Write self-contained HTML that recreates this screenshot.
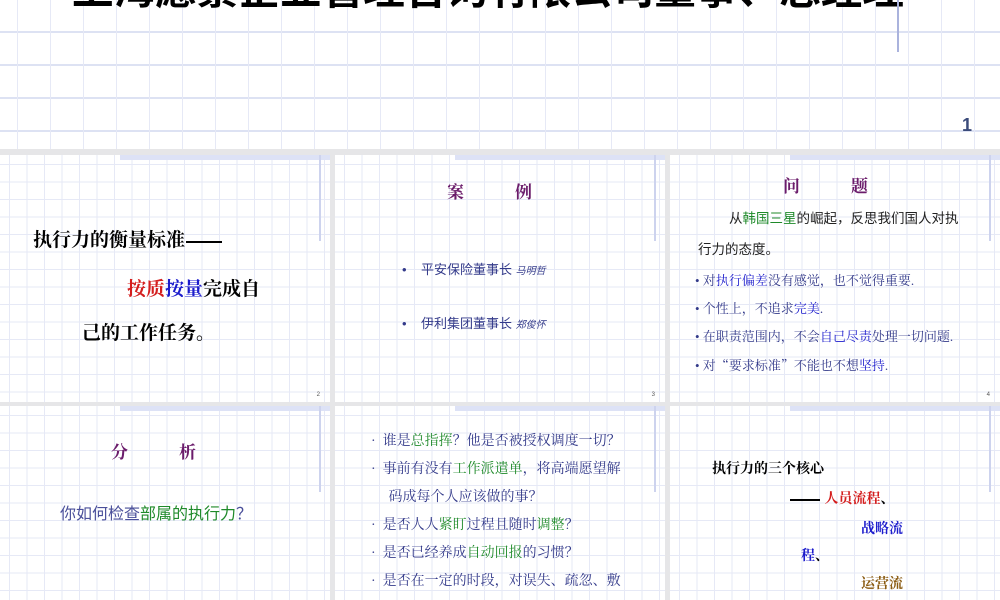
<!DOCTYPE html>
<html><head><meta charset="utf-8"><style>
*{margin:0;padding:0;box-sizing:border-box}
body{width:1000px;height:600px;background:#e6e6e8;position:relative;overflow:hidden;font-family:"Liberation Sans","Noto Sans CJK SC",sans-serif}
.top{position:absolute;left:0;top:0;width:1000px;height:149px;background-color:#fff;
background-image:linear-gradient(to right,#e6e9f6 1px,transparent 1px),linear-gradient(to bottom,#dde2f3 2px,transparent 2px);
background-size:33px 33px,33px 33px;background-position:17px 0,0 31px}
.s{position:absolute;width:330px;background-color:#fff;overflow:hidden;
background-image:linear-gradient(to right,#e6e9f6 1px,transparent 1px),linear-gradient(to bottom,#e6e9f6 1px,transparent 1px);
background-size:17.5px 17.5px;background-position:9px 0,0 9px}
.bar{position:absolute;left:120px;top:0;width:215px;height:5px;background:#dde2f6}
.vl{position:absolute;left:319px;top:0;width:2px;height:86px;background:#cdd3ee}
.t{position:absolute;white-space:nowrap;line-height:1}
.pn{position:absolute;font-size:6px;color:#555;right:10px;bottom:4px}
.k{font-family:"Liberation Serif","Noto Serif CJK SC",serif;font-weight:bold}
.cj{font-family:"Noto Serif CJK SC",serif}
.dash{display:inline-block;height:2px;background:#000;vertical-align:middle;margin:0 1px}
.pur{color:#6b1c6b;font-family:"Liberation Serif","Noto Serif CJK SC",serif;font-weight:bold;font-size:17px}
.nv{color:#333a8a}
.g{color:#1f8a2a}
.b{color:#1c1ccc}
.r{color:#d41e1e}
</style></head><body>
<div class="top">
<div class="t" style="left:72px;top:-31px;font-size:41.6px;font-weight:bold;color:#000">上海愿景企业管理咨询有限公司董事、总经理</div>
<div style="position:absolute;left:897px;top:0;width:2px;height:52px;background:#aab3dd"></div>
<div class="t" style="left:962px;top:116px;font-size:18px;font-weight:bold;color:#3a4a7a">1</div>
</div>

<div class="s" style="left:0;top:155px;height:247px"><div class="bar"></div><div class="vl"></div>
<div class="t k" style="left:33px;top:76px;font-size:19px;color:#000">执行力的衡量标准<span class="dash" style="width:36px"></span></div>
<div class="t k" style="left:127px;top:125px;font-size:19px;color:#000"><span class="r">按质</span><span class="b">按量</span>完成自</div>
<div class="t k" style="left:82px;top:169px;font-size:19px;color:#000">己的工作任务。</div>
<div class="pn">2</div></div>

<div class="s" style="left:335px;top:155px;height:247px"><div class="bar"></div><div class="vl"></div>
<div class="t pur" style="left:112px;top:29px">案　　　例</div>
<div class="t nv" style="left:67px;top:108px;font-size:13px">•&nbsp;&nbsp;&nbsp;&nbsp;平安保险董事长 <i style="font-size:10px">马明哲</i></div>
<div class="t nv" style="left:67px;top:162px;font-size:13px">•&nbsp;&nbsp;&nbsp;&nbsp;伊利集团董事长 <i style="font-size:10px">郑俊怀</i></div>
<div class="pn">3</div></div>

<div class="s" style="left:670px;top:155px;height:247px"><div class="bar"></div><div class="vl"></div>
<div class="t pur" style="left:113px;top:23px">问　　　题</div>
<div class="t" style="left:59px;top:57px;font-size:13.5px;color:#222">从<span class="g">韩国三星</span>的崛起，反思我们国人对执</div>
<div class="t" style="left:28px;top:88px;font-size:13.5px;color:#222">行力的态度。</div>
<div class="t k nv" style="left:25px;top:119px;font-size:13px;font-weight:normal">•&nbsp;对<span class="b">执行偏差</span>没有感觉，也不觉得重要.</div>
<div class="t k nv" style="left:25px;top:147px;font-size:13px;font-weight:normal">•&nbsp;个性上，不追求<span class="b">完美</span>.</div>
<div class="t k nv" style="left:25px;top:175px;font-size:13px;font-weight:normal">•&nbsp;在职责范围内，不会<span class="b">自己尽责</span>处理一切问题.</div>
<div class="t k nv" style="left:25px;top:203px;font-size:13px;font-weight:normal">•&nbsp;对<span class="cj">“</span>要求标准<span class="cj">”</span>不能也不想<span class="b">坚持</span>.</div>
<div class="pn">4</div></div>

<div class="s" style="left:0;top:406px;height:194px"><div class="bar"></div><div class="vl"></div>
<div class="t pur" style="left:111px;top:38px">分　　　析</div>
<div class="t nv" style="left:60px;top:101px;font-size:16px;color:#4a4f9a">你如何检查<span class="g">部属的执行力</span>？</div></div>

<div class="s" style="left:335px;top:406px;height:194px"><div class="bar"></div><div class="vl"></div>
<div class="t k nv" style="left:36px;top:22px;font-size:14px;font-weight:normal;line-height:28px">·&nbsp;&nbsp;谁是<span class="g">总指挥</span>？他是否被授权调度一切？<br>·&nbsp;&nbsp;事前有没有<span class="g">工作派遣单</span>，将高端愿望解<br>&nbsp;&nbsp;&nbsp;&nbsp;&nbsp;码成每个人应该做的事？<br>·&nbsp;&nbsp;是否人人<span class="g">紧盯</span>过程且随时<span class="g">调整</span>？<br>·&nbsp;&nbsp;是否已经养成<span class="g">自动回报</span>的习惯？<br>·&nbsp;&nbsp;是否在一定的时段，对误失、疏忽、敷<br>&nbsp;&nbsp;&nbsp;&nbsp;&nbsp;衍，提出<span class="g">诚实地总结</span>？</div></div>

<div class="s" style="left:670px;top:406px;height:194px"><div class="bar"></div><div class="vl"></div>
<div class="t k" style="left:42px;top:57px;font-size:14px;color:#000">执行力的三个核心</div>
<div class="t k" style="left:119px;top:87px;font-size:14px;color:#000"><span class="dash" style="width:30px"></span> <span class="r">人员流程</span>、</div>
<div class="t k b" style="left:191px;top:117px;font-size:14px">战略流</div>
<div class="t k" style="left:131px;top:144px;font-size:14px;color:#000"><span class="b">程</span>、</div>
<div class="t k" style="left:191px;top:172px;font-size:14px;color:#8a5a10">运营流</div></div>
</body></html>
